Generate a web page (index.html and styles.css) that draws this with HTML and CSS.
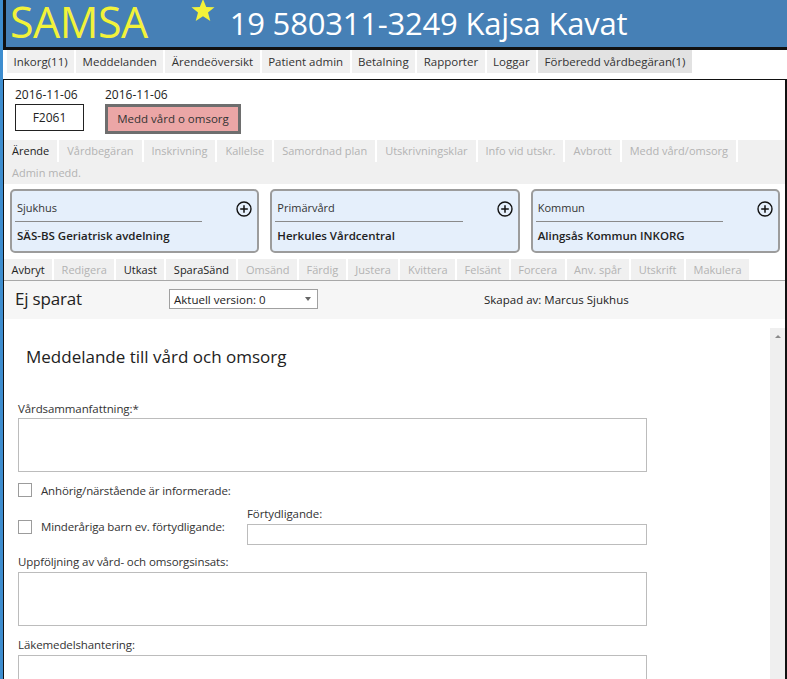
FILE: index.html
```html
<!DOCTYPE html>
<html lang="sv">
<head>
<meta charset="utf-8">
<title>SAMSA</title>
<link rel="stylesheet" href="styles.css">
</head>
<body>
<div class="app">
  <header class="topbar">
    <span class="brand">SAMSA</span>
    <svg class="star" width="26" height="24" viewBox="0 0 26 24"><polygon points="13,0 16.2,8 24.5,8.3 18,13.6 20.3,22 13,17.2 5.7,22 8,13.6 1.5,8.3 9.8,8" fill="#f2f23a"/></svg>
    <span class="patient">19 580311-3249 Kajsa Kavat</span>
  </header>

  <nav class="maintabs">
    <span class="tab">Inkorg(11)</span>
    <span class="tab">Meddelanden</span>
    <span class="tab">Ärendeöversikt</span>
    <span class="tab">Patient admin</span>
    <span class="tab">Betalning</span>
    <span class="tab">Rapporter</span>
    <span class="tab">Loggar</span>
    <span class="tab current">Förberedd vårdbegäran(1)</span>
  </nav>

  <main class="panel">
    <div class="docs">
      <div class="doc">
        <div class="doc-date">2016-11-06</div>
        <div class="doc-box">F2061</div>
      </div>
      <div class="doc">
        <div class="doc-date">2016-11-06</div>
        <div class="doc-box selected">Medd vård o omsorg</div>
      </div>
    </div>

    <div class="casetabs">
      <div class="tabrow">
        <span class="ctab on">Ärende</span>
        <span class="ctab">Vårdbegäran</span>
        <span class="ctab">Inskrivning</span>
        <span class="ctab">Kallelse</span>
        <span class="ctab">Samordnad plan</span>
        <span class="ctab">Utskrivningsklar</span>
        <span class="ctab">Info vid utskr.</span>
        <span class="ctab">Avbrott</span>
        <span class="ctab">Medd vård/omsorg</span>
      </div>
      <div class="tabrow">
        <span class="ctab plain">Admin medd.</span>
      </div>
    </div>

    <div class="cards">
      <div class="card">
        <div class="card-head">
          <span class="card-label">Sjukhus</span>
          <svg class="plus" width="16" height="16" viewBox="0 0 16 16"><circle cx="8" cy="8" r="7" fill="none" stroke="#111" stroke-width="1.4"/><path d="M8 4.2v7.6M4.2 8h7.6" stroke="#111" stroke-width="1.5"/></svg>
        </div>
        <div class="card-value">SÄS-BS Geriatrisk avdelning</div>
      </div>
      <div class="card">
        <div class="card-head">
          <span class="card-label">Primärvård</span>
          <svg class="plus" width="16" height="16" viewBox="0 0 16 16"><circle cx="8" cy="8" r="7" fill="none" stroke="#111" stroke-width="1.4"/><path d="M8 4.2v7.6M4.2 8h7.6" stroke="#111" stroke-width="1.5"/></svg>
        </div>
        <div class="card-value">Herkules Vårdcentral</div>
      </div>
      <div class="card">
        <div class="card-head">
          <span class="card-label">Kommun</span>
          <svg class="plus" width="16" height="16" viewBox="0 0 16 16"><circle cx="8" cy="8" r="7" fill="none" stroke="#111" stroke-width="1.4"/><path d="M8 4.2v7.6M4.2 8h7.6" stroke="#111" stroke-width="1.5"/></svg>
        </div>
        <div class="card-value">Alingsås Kommun INKORG</div>
      </div>
    </div>

    <div class="toolbar">
      <span class="tb on">Avbryt</span>
      <span class="tb">Redigera</span>
      <span class="tb on">Utkast</span>
      <span class="tb on">SparaSänd</span>
      <span class="tb">Omsänd</span>
      <span class="tb">Färdig</span>
      <span class="tb">Justera</span>
      <span class="tb">Kvittera</span>
      <span class="tb">Felsänt</span>
      <span class="tb">Forcera</span>
      <span class="tb">Anv. spår</span>
      <span class="tb">Utskrift</span>
      <span class="tb">Makulera</span>
    </div>

    <div class="infobar">
      <span class="status">Ej sparat</span>
      <div class="version">
        <span>Aktuell version: 0</span>
        <span class="caret"></span>
      </div>
      <span class="creator">Skapad av: Marcus Sjukhus</span>
    </div>

    <div class="formwrap">
      <div class="form">
        <h2 class="form-title">Meddelande till vård och omsorg</h2>

        <div class="field-label first">Vårdsammanfattning:*</div>
        <div class="textbox area"></div>

        <div class="check-row">
          <span class="checkbox"></span>
          <span class="check-text">Anhörig/närstående är informerade:</span>
        </div>

        <div class="check-row split">
          <div class="check-left">
            <span class="checkbox"></span>
            <span class="check-text">Minderåriga barn ev. förtydligande:</span>
          </div>
          <div class="clarify">
            <div class="field-label">Förtydligande:</div>
            <div class="textbox line"></div>
          </div>
        </div>

        <div class="field-label">Uppföljning av vård- och omsorgsinsats:</div>
        <div class="textbox area"></div>

        <div class="field-label">Läkemedelshantering:</div>
        <div class="textbox area"></div>
      </div>
      <div class="scrollbar"><span class="arrow-up"></span></div>
    </div>
  </main>
</div>
</body>
</html>
```

FILE: styles.css
```css
* { box-sizing: border-box; }

html, body {
  margin: 0;
  height: 100%;
}

body {
  font-family: "Open Sans", "Noto Sans", sans-serif;
  font-size: 12px;
  color: #333;
  background: #fff;
  border-left: 3px solid #3d8dcf;
  overflow: hidden;
}

.app {
  display: flex;
  flex-direction: column;
  height: 679px;
}

/* Header */
.topbar {
  height: 50px;
  flex: none;
  background: #4680b6;
  border-left: 3px solid #111;
  border-bottom: 3px solid #111;
  display: flex;
  align-items: flex-start;
  padding-left: 4px;
}

.brand {
  color: #f2f23a;
  font-size: 43px;
  line-height: 47px;
  margin-top: -2px;
  height: 47px;
  letter-spacing: -0.5px;
}

.star {
  margin-left: 42px;
  margin-top: -1px;
}

.patient {
  color: #fff;
  font-size: 31px;
  line-height: 47px;
  margin-left: 14px;
  letter-spacing: -0.2px;
}

/* Main tabs */
.maintabs {
  display: flex;
  gap: 2px;
  margin-left: 4px;
  height: 23px;
  flex: none;
  margin-bottom: 6px;
}

.maintabs .tab {
  background: #f0f0f0;
  padding: 0 6.5px;
  font-size: 11.5px;
  line-height: 23px;
  color: #333;
  white-space: nowrap;
}

.maintabs .tab.current {
  background: #e2e2e2;
}

/* Panel */
.panel {
  flex: 1;
  display: flex;
  flex-direction: column;
  border-top: 1px solid #111;
  border-left: 1px solid #111;
  border-right: 2px solid #111;
  min-height: 0;
}

.docs {
  display: flex;
  gap: 21px;
  padding: 7px 0 6px 11px;
  align-items: flex-start;
}

.doc-date {
  line-height: 16px;
  color: #222;
}

.doc-box {
  margin-top: 1px;
  border: 1px solid #222;
  height: 27px;
  width: 69px;
  line-height: 25px;
  text-align: center;
  color: #222;
}

.doc-box.selected {
  height: 30px;
  width: 136px;
  border: 3px solid #6e6e6e;
  background: #eba6a6;
  font-size: 11.5px;
  line-height: 24px;
  color: #333;
}

/* Case tabs */
.casetabs {
  background: #f0f0f0;
}

.tabrow {
  display: flex;
  height: 22px;
}

.ctab {
  padding: 0 8px;
  font-size: 11px;
  line-height: 22px;
  color: #b3b3b3;
  border-right: 2px solid #fff;
  white-space: nowrap;
}

.ctab.on {
  color: #222;
}

.ctab.plain {
  border-right: none;
}

/* Cards */
.cards {
  display: grid;
  grid-template-columns: repeat(3, 1fr);
  gap: 11px;
  padding: 5px 5px 6px 6px;
}

.card {
  background: #e5effb;
  border: 2px solid #9c9c9c;
  border-radius: 5px;
  padding: 9px 5px 7px 3px;
}

.card-head {
  display: flex;
  align-items: flex-start;
}

.card-label {
  flex: 1;
  font-size: 11px;
  line-height: 16px;
  padding: 0 0 5px 2px;
  border-bottom: 1px solid #8a8a8a;
  margin-right: 34px;
  color: #333;
}

.plus {
  margin-top: 1px;
  flex: none;
}

.card-value {
  font-weight: 600;
  font-size: 11.5px;
  color: #222;
  line-height: 16px;
  padding: 6px 0 0 2px;
}

/* Toolbar */
.toolbar {
  display: flex;
  height: 22px;
  border-bottom: 1px solid #a8a8a8;
}

.tb {
  background: #f0f0f0;
  padding: 0 7.5px;
  font-size: 11px;
  line-height: 21px;
  color: #b3b3b3;
  border-right: 2px solid #fff;
  white-space: nowrap;
}

.tb.on {
  color: #222;
}

/* Info bar */
.infobar {
  display: flex;
  align-items: center;
  height: 38px;
  background: #f6f6f6;
  padding-left: 11px;
}

.status {
  width: 154px;
  font-size: 17px;
  letter-spacing: -0.2px;
  color: #222;
  line-height: 24px;
  margin-top: -3px;
}

.version {
  width: 149px;
  height: 20px;
  border: 1px solid #a0a0a0;
  background: #fff;
  display: flex;
  align-items: center;
  justify-content: space-between;
  padding: 0 6px 0 4px;
  font-size: 11.5px;
  color: #222;
  margin-top: -2px;
}

.caret {
  width: 0;
  height: 0;
  border-left: 3.5px solid transparent;
  border-right: 3.5px solid transparent;
  border-top: 4px solid #666;
}

.creator {
  margin-left: 166px;
  font-size: 11.5px;
  color: #222;
  margin-top: -1px;
}

/* Form */
.formwrap {
  flex: 1;
  display: flex;
  min-height: 0;
  background: #fff;
}

.form {
  flex: 1;
  padding: 26px 0 0 14px;
}

.form-title {
  margin: 0 0 32px 8px;
  font-size: 17px;
  font-weight: 400;
  line-height: 24px;
  color: #222;
}

.field-label {
  font-size: 11.5px;
  letter-spacing: -0.1px;
  line-height: 16px;
  color: #333;
  margin-bottom: 2px;
}

.field-label.first {
  margin-bottom: 1px;
}

.textbox {
  border: 1px solid #bcbcbc;
  background: #fff;
  width: 629px;
}

.textbox.area {
  height: 54px;
}

.textbox.line {
  width: 400px;
  height: 21px;
}

.check-row {
  display: flex;
  align-items: center;
  gap: 9px;
  margin-top: 9px;
  height: 18px;
}

.check-row.split {
  height: auto;
  margin-top: 7px;
  gap: 0;
  margin-bottom: 9px;
}

.check-left {
  display: flex;
  align-items: center;
  gap: 9px;
  width: 229px;
  padding-top: 2px;
}

.checkbox {
  width: 14px;
  height: 14px;
  border: 1px solid #9c9c9c;
  background: #fff;
  flex: none;
}

.check-text {
  font-size: 11.5px;
  letter-spacing: -0.15px;
  color: #333;
}

.clarify .field-label {
  margin-bottom: 2px;
}

.form > .textbox.area + .field-label {
  margin-top: 11px;
}

.scrollbar {
  width: 15px;
  flex: none;
  margin-top: 9px;
  background: #efefef;
  display: flex;
  justify-content: center;
  padding-top: 7px;
}

.arrow-up {
  width: 0;
  height: 0;
  border-left: 3px solid transparent;
  border-right: 3px solid transparent;
  border-bottom: 3px solid #8a8a8a;
}
```
